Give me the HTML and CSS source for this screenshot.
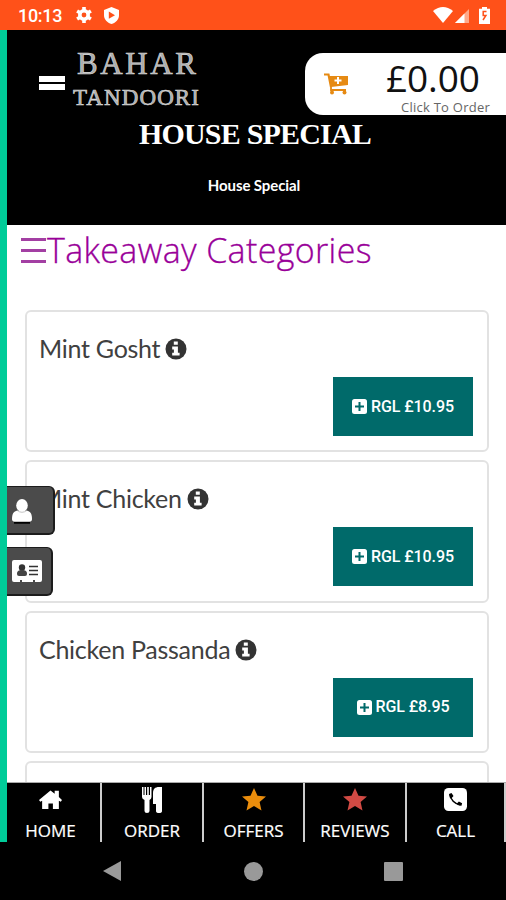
FILE: index.html
```html
<!DOCTYPE html>
<html lang="en">
<head>
<meta charset="utf-8">
<title>Bahar Tandoori</title>
<link rel="stylesheet" href="styles.css">
</head>
<body>
<svg width="0" height="0" class="defs">
  <symbol id="info" viewBox="0 0 22 22"><circle cx="11" cy="11" r="10.5" fill="#333"/><path fill="#fff" d="M8.8 3.5h4v3.3h-4zM7.2 8.6h5.7v6.2h1.7v2.8H7.2v-2.8h1.7v-3.4H7.2z"/></symbol>
  <symbol id="plus" viewBox="0 0 15 15"><rect width="15" height="15" rx="2.5" fill="#fff"/><path d="M7.5 3v9M3 7.5h9" stroke="#006a6a" stroke-width="2"/></symbol>
  <symbol id="star" viewBox="0 0 24 23"><path d="M12 0l3.5 7.7 8.5.8-6.4 5.6 1.9 8.4-7.5-4.4-7.5 4.4 1.9-8.4L0 8.500l8.500-.8z"/></symbol>
</svg>
<div class="status">
  <span class="time">10:13</span>
  <svg class="gear" width="16" height="16" viewBox="0 0 16 16"><circle cx="8" cy="8" r="4.200" fill="none" stroke="#fff" stroke-width="3.600"/><path d="M8 0v3.500M8 12.500V16M1.100 4l3 1.800M11.900 10.200l3 1.800M1.100 12l3-1.800M11.900 5.800l3-1.800" stroke="#fff" stroke-width="3.600"/></svg>
  <svg class="shield" width="15" height="17" viewBox="0 0 15 17"><path d="M7.500 0L15 3v5c0 4.500-3.200 7.800-7.500 9C3.200 15.800 0 12.500 0 8V3z" fill="#fff"/><path d="M4.800 4.500l6.200 3.700-6.200 3.600z" fill="#ff5119"/></svg>
  <span class="grow"></span>
  <svg width="20" height="16" viewBox="0 0 20 16"><path d="M0 4Q10-4 20 4L10 16z" fill="#fff"/></svg>
  <svg class="signal" width="14" height="14" viewBox="0 0 14 14"><path d="M14 0v14H0z" fill="#ffa98a"/><path d="M9.500 4.500V14H0z" fill="#fff"/></svg>
  <svg class="battery" width="11" height="17" viewBox="0 0 11 17"><path d="M3 0h5v1.700h3V17H0V1.700h3z" fill="#fff"/><path d="M7.500 4.500H4.200v4h2.700L4 13" stroke="#ff5119" stroke-width="1.500" fill="none"/></svg>
</div>
<main class="app">
  <header class="hero">
    <div class="burger"></div>
    <div class="logo"><div class="bahar">BAHAR</div><div class="tandoori">TANDOORI</div></div>
    <h1>HOUSE SPECIAL</h1>
    <p>House Special</p>
    <div class="cart">
      <svg width="25" height="22" viewBox="0 0 25 22"><path d="M0 1.500h4.500L7 14" stroke="#e68a13" stroke-width="2.200" fill="none"/><path d="M5 3h19v9L7 14z" fill="#e68a13"/><path d="M7 14v3h15" stroke="#e68a13" stroke-width="1.800" fill="none"/><circle cx="8" cy="19.500" r="2" fill="#e68a13"/><circle cx="20.500" cy="19.500" r="2" fill="#e68a13"/><path d="M14 4v7M10.500 7.500h7" stroke="#fff" stroke-width="2"/></svg>
      <div class="total"><div class="amount">£0.00</div><div class="click">Click To Order</div></div>
    </div>
  </header>
  <section class="content">
    <h2><i class="lines"></i><span>Takeaway Categories</span></h2>
    <div class="cards">
      <article><h3><span>Mint Gosht</span><svg width="22" height="22"><use href="#info"/></svg></h3><button><svg width="15" height="15"><use href="#plus"/></svg><span>RGL £10.95</span></button></article>
      <article><h3><span>Mint Chicken</span><svg width="22" height="22"><use href="#info"/></svg></h3><button><svg width="15" height="15"><use href="#plus"/></svg><span>RGL £10.95</span></button></article>
      <article><h3><span>Chicken Passanda</span><svg width="22" height="22"><use href="#info"/></svg></h3><button><svg width="15" height="15"><use href="#plus"/></svg><span>RGL £8.95</span></button></article>
      <article></article>
    </div>
  </section>
  <div class="side">
    <div class="tab user"><svg width="20" height="25" viewBox="0 0 20 25"><path d="M2 23.500h16" stroke="#000" stroke-width="2.500"/><path d="M0 20c0-5 1.500-7.500 4.500-8.300h11c3 .8 4.500 3.300 4.500 8.300 0 1.800-1 2.700-2.500 2.700h-15C1 22.700 0 21.800 0 20z" fill="#fff"/><ellipse cx="10" cy="6.500" rx="5.800" ry="6.500" fill="#fff"/><path d="M5 11.300q5 4 10 0" stroke="#aaa" stroke-width=".7" fill="none"/></svg></div>
    <div class="tab card"><svg width="30" height="24" viewBox="0 0 30 24"><path d="M2 0h26q2 0 2 2v18q0 2-2 2h-5v-2h-2v2H10v-2H8v2H2q-2 0-2-2V2q0-2 2-2z" fill="#fff"/><circle cx="10" cy="7.500" r="3.200" fill="#333"/><path d="M5 14c0-3 1.500-4 5-4s5 1 5 4q0 2-2 2H7q-2 0-2-2z" fill="#444"/><path d="M17 6.500h9M17 10.500h9M17 14.500h9" stroke="#333" stroke-width="1.500"/></svg></div>
  </div>
  <nav class="tabs">
    <a><svg width="23" height="20" viewBox="0 0 22 20" preserveAspectRatio="none"><path d="M11 .5l4 3.200V.8h4v6.200l3 3-1.200 1.700-1.800-1V19h-5.700v-5.500H9V19H3v-8.300l-1.800 1L0 10z" fill="#fff"/></svg><span>HOME</span></a>
    <a><svg width="20" height="26" viewBox="0 0 20 26"><path d="M0 0h1.500v8h1V0H4v8h1.200V0h1.600v8H8V0h1.500v10Q9.500 12 7.500 13v11q0 2-2.500 2t-2.500-2V13Q0 12 0 10zM20 0v24q0 2-3 2t-3-2v-7h-3V6c0-4 2-6 6-6z" fill="#fff"/></svg><span>ORDER</span></a>
    <a><svg width="24" height="23" fill="#ea8d0c"><use href="#star"/></svg><span>OFFERS</span></a>
    <a><svg width="24" height="23" fill="#d14a44"><use href="#star"/></svg><span>REVIEWS</span></a>
    <a><svg width="23" height="23" viewBox="0 0 23 23"><rect width="23" height="23" rx="4.500" fill="#fff"/><path d="M6 6.500c.5 5 4.500 9.500 10.500 10.500" stroke="#000" stroke-width="1.500" fill="none"/><path d="M5 6l2.500-1 2 3-2 2.200H6zM17.500 17.800l.6-2.500-3.200-1.800-2 2 .6 1.600z"/></svg><span>CALL</span></a>
  </nav>
</main>
<footer class="sysnav"><svg width="18" height="20" viewBox="0 0 18 20"><path d="M18 0v20L0 10z" fill="#999"/></svg><i class="dot"></i><i class="square"></i></footer>
</body>
</html>
```

FILE: styles.css
```css
* { box-sizing: border-box; }
body { margin: 0; width: 506px; height: 900px; overflow: hidden; background: #000; font-family: "Open Sans", sans-serif; display: flex; flex-direction: column; }
svg { display: block; flex: none; }
h1, h2, h3, p { margin: 0; font-weight: 400; white-space: nowrap; }
.defs { position: absolute; }
.status { height: 30px; flex: none; background: #ff5119; display: flex; align-items: center; padding: 0 16px 0 18px; }
.time { font: 500 18px/30px Roboto, sans-serif; color: #fff; width: 58px; letter-spacing: -.3px; padding-top: 2px; }
.shield { margin-left: 12px; }
.grow { flex: 1; }
.signal { margin: 2px 10px 0 2px; }
.app { height: 812px; flex: none; border-left: 7px solid #00cc99; background: #fff; position: relative; display: flex; flex-direction: column; overflow: hidden; }
.hero { height: 195px; flex: none; background: #000; color: #fff; position: relative; display: grid; grid-template-columns: 26px 130px; grid-template-rows: 87px 35px 73px; column-gap: 6px; padding-left: 32px; }
.burger { height: 14px; margin-top: 46px; border: solid #fff; border-width: 6px 0; }
.logo { font-family: "Liberation Serif", serif; font-weight: 400; color: #aaa; -webkit-text-stroke: .6px #ddd; padding-top: 17px; white-space: nowrap; }
.bahar { font-size: 31px; line-height: 34px; letter-spacing: 2.6px; padding-left: 6px; }
.tandoori { font-size: 23px; line-height: 33px; letter-spacing: 1.1px; padding-left: 2px; }
.hero h1, .hero p { grid-column: 1 / -1; width: 467px; margin-left: -32px; text-align: center; }
.hero h1 { font: 700 30px/34px "Liberation Serif", serif; letter-spacing: -.8px; padding-left: 29px; }
.hero p { font: 700 15px/24px Lato, sans-serif; margin-top: 21px; padding-left: 27px; letter-spacing: -.1px; }
.cart { position: absolute; left: 298px; top: 23px; width: 208px; height: 62px; background: #fff; border-radius: 18px 0 0 18px; color: #111; display: flex; padding: 20px 0 0 19px; }
.total { margin: -20px 0 0 37px; white-space: nowrap; }
.amount { font-size: 37px; line-height: 49px; letter-spacing: -.1px; }
.click { font-size: 13px; line-height: 12px; margin-top: -1px; color: #666; padding-left: 15px; letter-spacing: .25px; }
.content { flex: 1; padding: 0 17px 0 14px; }
h2 { display: flex; height: 85px; color: #990099; font-weight: 300; font-size: 34px; line-height: 50px; letter-spacing: .35px; -webkit-text-stroke: .3px #990099; }
.lines { width: 25px; height: 25px; margin: 13px 1px 0 0; background: linear-gradient(#a33fa3 0 3px, #fff 3px 11px, #a33fa3 11px 14px, #fff 14px 22px, #a33fa3 22px); }
.cards { display: grid; gap: 8px; padding-left: 4px; grid-auto-rows: 142.3px; }
article { border: 2px solid #e2e2e2; border-radius: 6px; padding: 21px 14px 0 12px; display: flex; flex-direction: column; }
h3 { font: 400 25px/31px Lato, sans-serif; color: #404040; height: 44px; display: flex; gap: 5px; align-items: flex-start; letter-spacing: -.27px; }
h3 svg { margin-top: 5px; }
button { align-self: flex-end; width: 140px; height: 59px; border: 0; background: #006a6a; padding: 0; display: flex; align-items: center; justify-content: center; gap: 4px; color: #fff; font: 500 16px/20px Roboto, sans-serif; letter-spacing: -.1px; white-space: nowrap; }
.side { position: absolute; left: 0; top: 456px; display: grid; gap: 12px; }
.tab { height: 49px; background: #4b4b4b; border: solid #1c1c1c; border-width: 1px 2px 2px 0; border-radius: 0 6px 6px 0; }
.user { width: 48px; padding: 12px 0 0 5px; }
.card { width: 46px; padding: 12px 0 0 5px; }
.tabs { position: absolute; left: 0; right: 0; bottom: 0; height: 60px; background: #000; border-top: 1px solid #aaa; display: grid; grid-template-columns: 95px 102px 101px 102px 99px; }
.tabs a { border-right: 2px solid #ccc; color: #fff; display: grid; grid-template-rows: 33px 28px; justify-items: center; align-items: center; padding-right: 6px; font-size: 17px; line-height: 25px; }
.tabs a:nth-child(n+2) { padding-right: 0; }
.tabs span { white-space: nowrap; -webkit-text-stroke: .2px #fff; }
.sysnav { height: 58px; display: flex; align-items: center; padding-left: 103px; }
.dot { width: 19px; height: 19px; border-radius: 50%; background: #999; margin-left: 123px; }
.square { width: 19px; height: 19px; border-radius: 1px; background: #999; margin-left: 121px; }
```
